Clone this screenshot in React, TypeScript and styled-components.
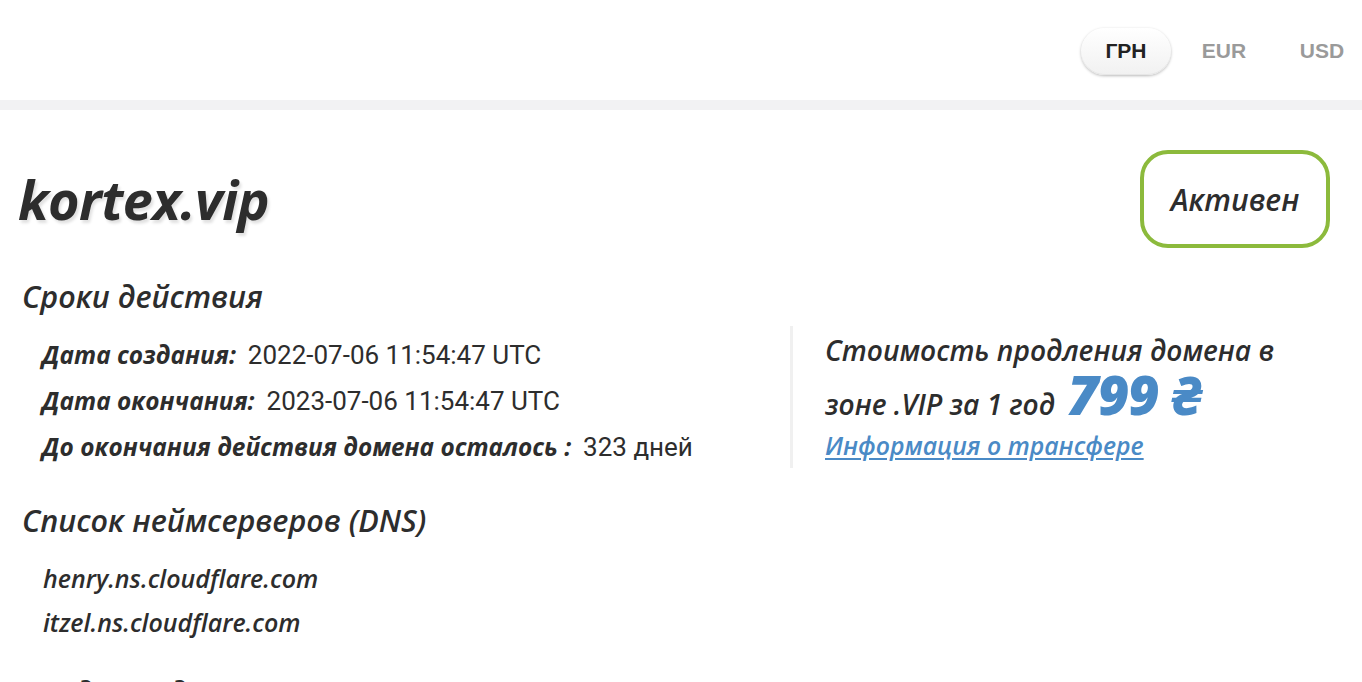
import React from "react";
import styled, { createGlobalStyle } from "styled-components";

const Global = createGlobalStyle`
  html, body { margin: 0; padding: 0; background: #fff; overflow: hidden; }
  body { font-family: "Open Sans", "Noto Sans", sans-serif; color: #2d2d2d; }
`;

const Header = styled.header`
  height: 100px;
  display: flex;
  justify-content: flex-end;
  align-items: center;
  padding-top: 2px;
  box-sizing: border-box;
`;

const Tabs = styled.div`
  display: flex;
  gap: 8px;
  margin-right: -5px;
`;

const Tab = styled.button<{ $active?: boolean }>`
  width: 90px;
  height: 47px;
  border: none;
  border-radius: 24px;
  font-family: "Liberation Sans", Arial, sans-serif;
  font-weight: 700;
  font-size: 21px;
  color: ${(p) => (p.$active ? "#222" : "#9a9a9a")};
  background: ${(p) => (p.$active ? "linear-gradient(#ffffff, #f1f1f1)" : "transparent")};
  box-shadow: ${(p) => (p.$active ? "0 1px 3px rgba(0,0,0,0.28), inset 0 -1px 0 #e6e6e6" : "none")};
  cursor: pointer;
  padding: 0;
`;

const Band = styled.div`
  height: 10px;
  background: #f2f2f3;
`;

const Main = styled.main`
  padding: 40px 32px 0 18px;
`;

const TitleRow = styled.div`
  display: flex;
  justify-content: space-between;
  align-items: center;
`;

const Title = styled.h1`
  margin: 0;
  font-size: 54px;
  font-weight: 700;
  font-style: italic;
  color: #2d2d2d;
  letter-spacing: -0.6px;
  text-shadow: 2px 3px 3px rgba(0, 0, 0, 0.12);
`;

const Badge = styled.div`
  width: 190px;
  height: 98px;
  box-sizing: border-box;
  border: 4px solid #8cba3c;
  border-radius: 28px;
  display: flex;
  align-items: center;
  justify-content: center;
  font-size: 30px;
  font-style: italic;
  font-weight: 600;
  color: #2d2d2d;
`;

const SectionTitle = styled.h2<{ $mt: number }>`
  margin: ${(p) => p.$mt}px 0 0 4px;
  font-size: 30.5px;
  line-height: 36px;
  font-weight: 600;
  font-style: italic;
  color: #2d2d2d;
`;

const InfoGrid = styled.div`
  display: grid;
  grid-template-columns: 772px 1fr;
  margin-top: 12px;
`;

const DatesList = styled.div`
  padding: 6px 0 0 24px;
`;

const DateRow = styled.div`
  line-height: 46px;
  height: 46px;
  white-space: nowrap;
`;

const Label = styled.span`
  font-size: 24.4px;
  font-weight: 700;
  font-style: italic;
  color: #2d2d2d;
  margin-right: 12px;
`;

const Value = styled.span`
  font-family: Roboto, "Liberation Sans", sans-serif;
  font-size: 26px;
  color: #2d2d2d;
`;

const PriceBox = styled.div`
  border-left: 3px solid #f0f0f0;
  padding: 0 0 0 32px;
  height: 142px;
  box-sizing: border-box;
`;

const PriceText = styled.div`
  font-size: 28.1px;
  line-height: 48px;
  font-weight: 600;
  font-style: italic;
  color: #2d2d2d;
  max-width: 480px;
`;

const Price = styled.span`
  margin-left: 5px;
  font-size: 54px;
  font-weight: 800;
  color: #4a8ac6;
  letter-spacing: -1px;
  line-height: 40px;
`;

const Link = styled.a`
  display: block;
  margin-top: -7px;
  font-size: 24.8px;
  line-height: 48px;
  font-weight: 600;
  font-style: italic;
  color: #4a8ac6;
  text-decoration: underline;
  text-underline-offset: 3px;
`;

const NsList = styled.div`
  margin-top: 18px;
  padding-left: 25px;
`;

const NsItem = styled.div`
  font-size: 25px;
  line-height: 44px;
  font-weight: 600;
  font-style: italic;
  color: #2d2d2d;
`;

export default function App() {
  return (
    <>
      <Global />
      <Header>
        <Tabs>
          <Tab $active>ГРН</Tab>
          <Tab>EUR</Tab>
          <Tab>USD</Tab>
        </Tabs>
      </Header>
      <Band />
      <Main>
        <TitleRow>
          <Title>kortex.vip</Title>
          <Badge>Активен</Badge>
        </TitleRow>
        <SectionTitle $mt={30}>Сроки действия</SectionTitle>
        <InfoGrid>
          <DatesList>
            <DateRow>
              <Label>Дата создания:</Label>
              <Value>2022-07-06 11:54:47 UTC</Value>
            </DateRow>
            <DateRow>
              <Label>Дата окончания:</Label>
              <Value>2023-07-06 11:54:47 UTC</Value>
            </DateRow>
            <DateRow>
              <Label>До окончания действия домена осталось :</Label>
              <Value>323 дней</Value>
            </DateRow>
          </DatesList>
          <PriceBox>
            <PriceText>
              Стоимость продления домена в зоне .VIP за 1 год <Price>799 ₴</Price>
            </PriceText>
            <Link href="#">Информация о трансфере</Link>
          </PriceBox>
        </InfoGrid>
        <SectionTitle $mt={32}>Список неймсерверов (DNS)</SectionTitle>
        <NsList>
          <NsItem>henry.ns.cloudflare.com</NsItem>
          <NsItem>itzel.ns.cloudflare.com</NsItem>
        </NsList>
        <SectionTitle $mt={30}>Владелец домена</SectionTitle>
      </Main>
    </>
  );
}
